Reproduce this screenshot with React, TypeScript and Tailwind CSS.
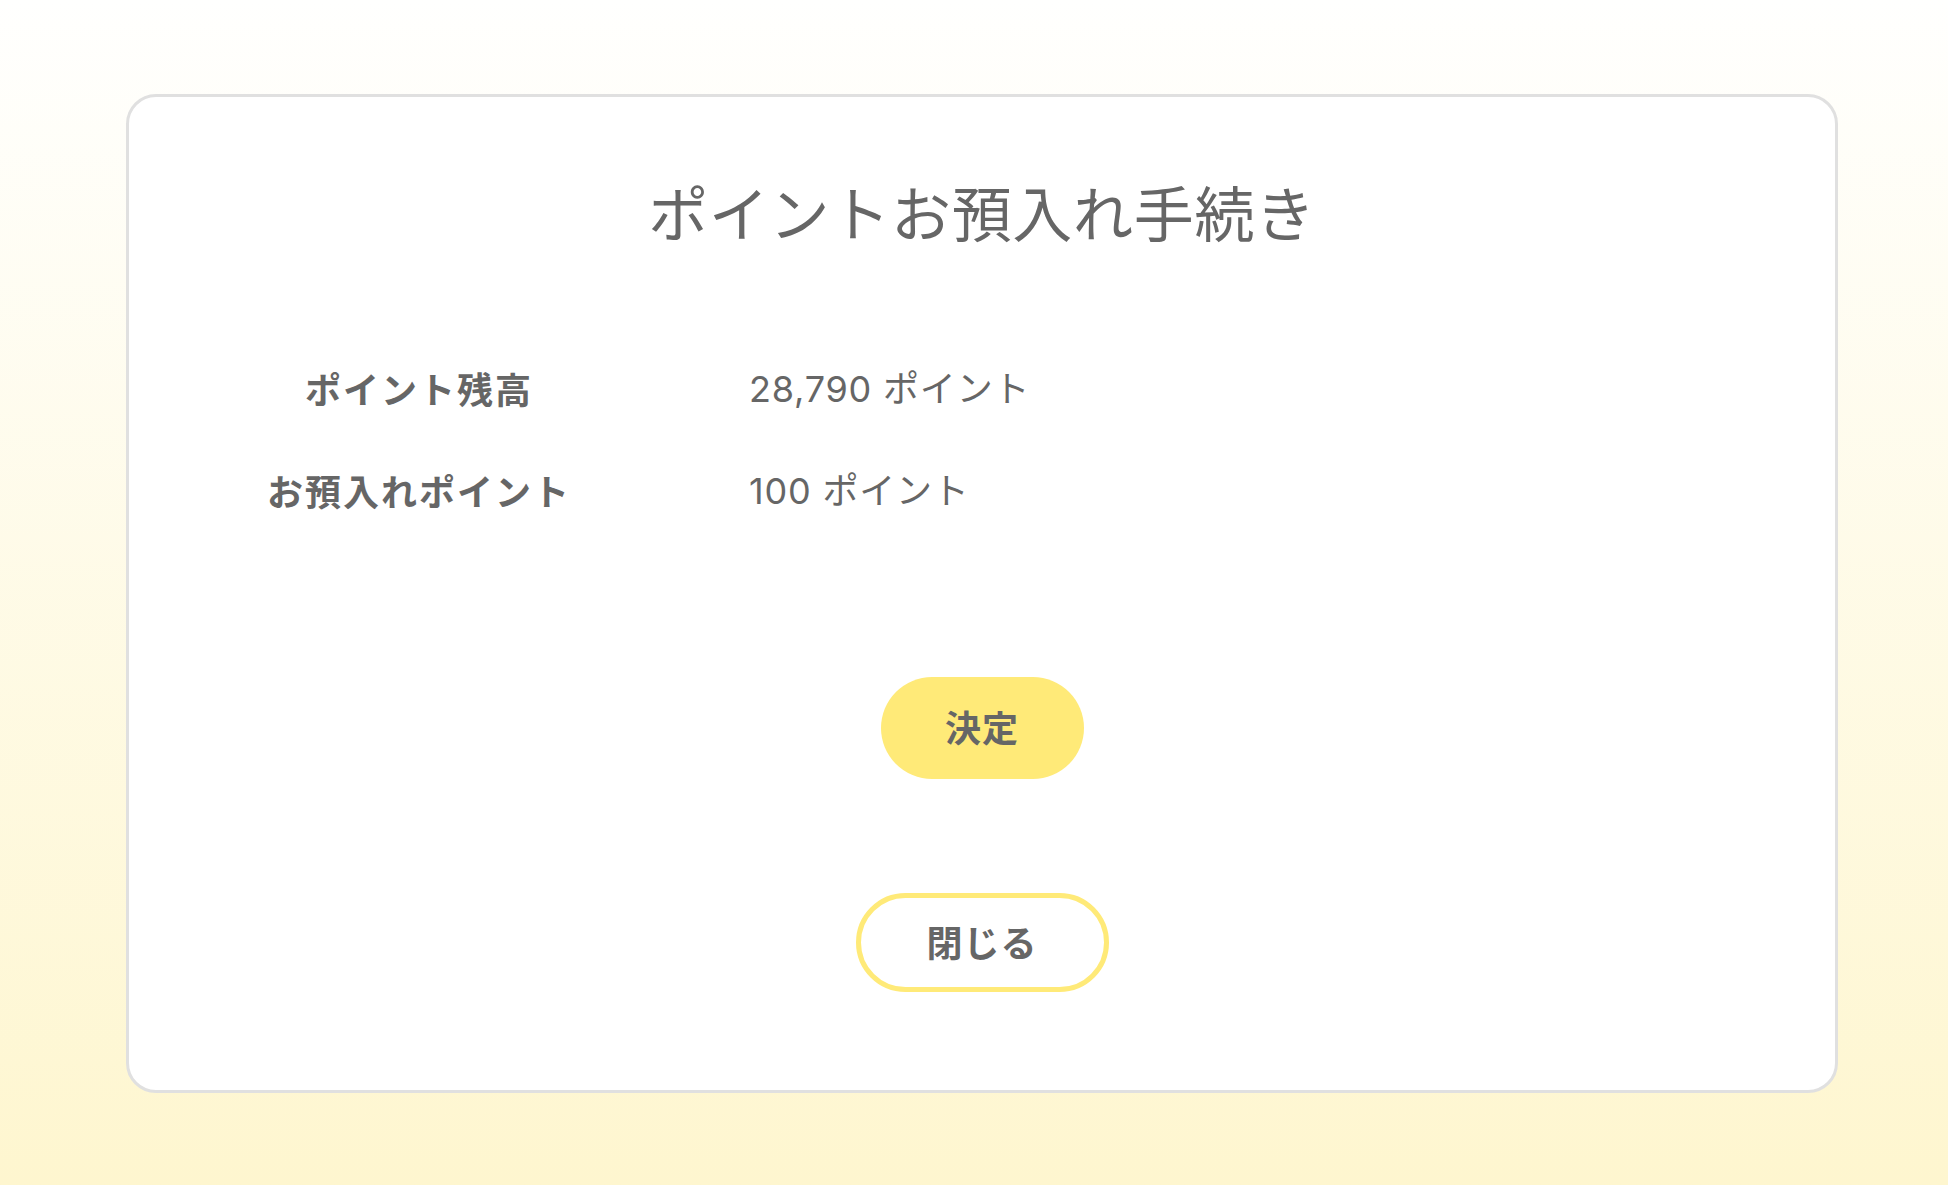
const jp = { fontFamily: '"Noto Sans CJK JP", sans-serif' };
const mixed = { fontFamily: 'Inter, "Noto Sans CJK JP", sans-serif' };

interface RowProps {
  label: string;
  value: string;
}

const Row = ({ label, value }: RowProps) => {
  return (
    <div className="flex h-[60px] items-center">
      <div
        className="w-[340px] pb-[3px] text-center text-[36px] font-bold tracking-[2px] text-[#666666]"
        style={jp}
      >
        {label}
      </div>
      <div className="ml-[160px] text-[36px] tracking-[0.8px] text-[#666666]" style={mixed}>
        {value}
      </div>
    </div>
  );
};

const App = () => {
  return (
    <div className="min-h-screen bg-linear-to-b from-[#fffffe] to-[#fef6cf] pl-[126px] pr-[110px] pt-[94px]">
      <div className="flex h-[999px] flex-col rounded-[30px] border-[3px] border-[#e0e0e0] bg-white pt-[84px] pb-[97px]">
        <h1
          className="text-center text-[60px] leading-[60px] font-normal tracking-[0.7px] text-[#666666]"
          style={jp}
        >
          ポイントお預入れ手続き
        </h1>

        <div className="mt-[118px] flex flex-col gap-[42px] pl-[120px]">
          <Row label="ポイント残高" value="28,790 ポイント" />
          <Row label="お預入れポイント" value="100 ポイント" />
        </div>

        <div className="mt-[156px] flex flex-col items-center">
          <button
            className="flex h-[102px] w-[203px] items-center justify-center rounded-full bg-[#ffea78] pb-[4px] text-[36px] font-bold tracking-[1px] text-[#666666]"
            style={jp}
          >
            決定
          </button>
          <button
            className="mt-[114px] flex h-[99px] w-[253px] items-center justify-center rounded-full border-[5px] border-[#ffea78] bg-white pb-[4px] text-[36px] font-bold tracking-[1px] text-[#666666]"
            style={jp}
          >
            閉じる
          </button>
        </div>
      </div>
    </div>
  );
};

export default App;
